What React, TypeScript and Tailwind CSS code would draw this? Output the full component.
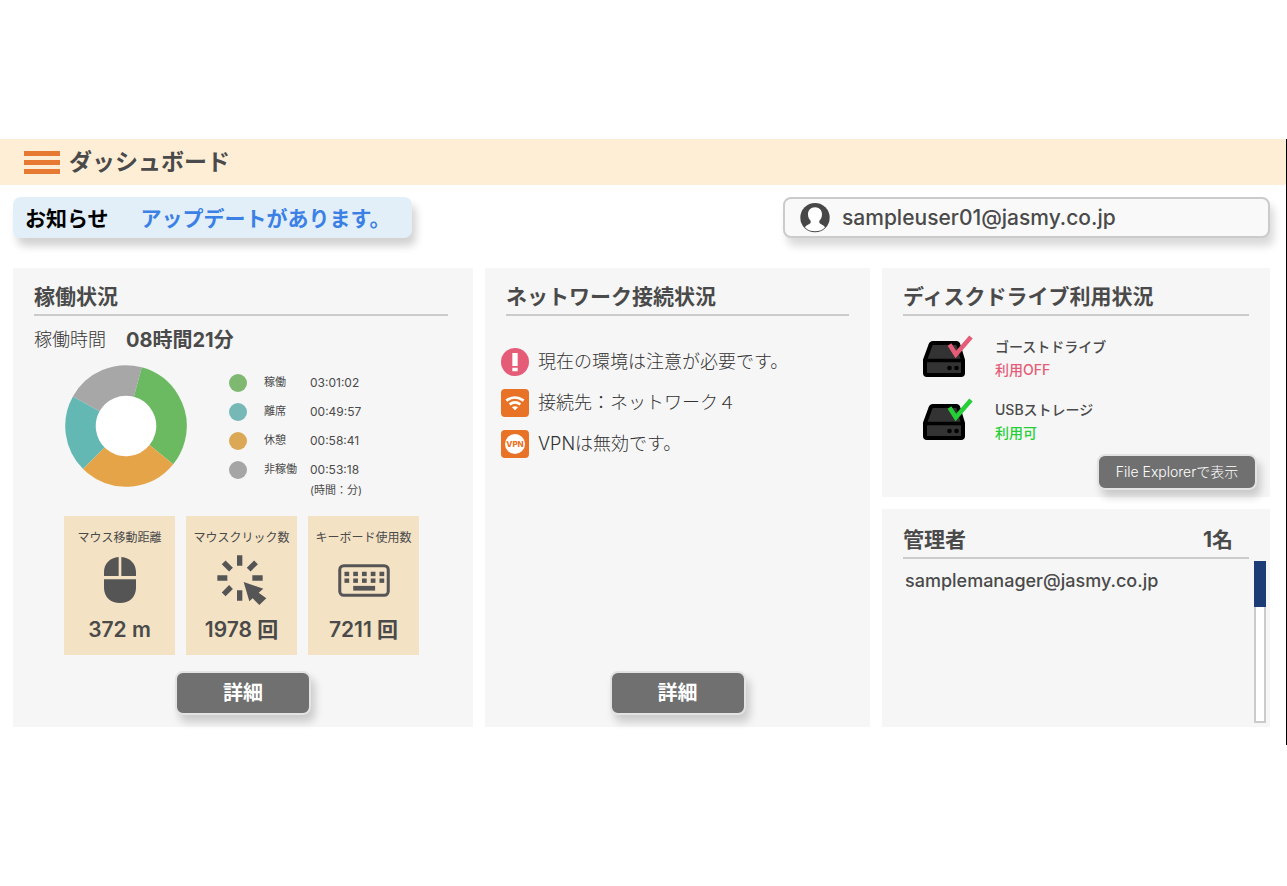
import type { ReactNode } from "react";

type Activity = { label: string; time: string; dot: string; stroke: string; from: number; to: number };

// from / to are degrees, clockwise from twelve o'clock
const activities: Activity[] = [
  { label: "稼働", time: "03:01:02", dot: "bg-[#7eb871]", stroke: "#6bba62", from: 15, to: 129 },
  { label: "離席", time: "00:49:57", dot: "bg-[#76b8b6]", stroke: "#64b8b3", from: 225, to: 299 },
  { label: "休憩", time: "00:58:41", dot: "bg-[#dba956]", stroke: "#e6a449", from: 129, to: 225 },
  { label: "非稼働", time: "00:53:18", dot: "bg-[#a5a5a5]", stroke: "#a7a7a7", from: 299, to: 375 },
];

function DonutChart() {
  return (
    <svg viewBox="0 0 122 122" className="h-[122px] w-[122px] shrink-0" role="img" aria-label="稼働状況">
      <circle cx="61" cy="61" r="31" fill="#fff" />
      {activities.map((a) => (
        <circle
          key={a.label}
          cx="61"
          cy="61"
          r="45.5"
          fill="none"
          stroke={a.stroke}
          strokeWidth="30.5"
          pathLength={360}
          strokeDasharray={`${a.to - a.from} ${360 - (a.to - a.from)}`}
          transform={`rotate(${a.from - 90} 61 61)`}
        />
      ))}
    </svg>
  );
}

function UserIcon() {
  return (
    <svg viewBox="0 0 90 90" className="h-[30px] w-[30px] shrink-0" aria-hidden="true">
      <circle cx="45" cy="44" r="44" fill="#474747" />
      <path
        d="M45 13c13 0 21 9 21 21 0 9-3 15-8 19v6c2 5 14 6 17 14-8 9-18 12-30 12S23 82 15 73c3-8 15-9 17-14v-6c-5-4-8-10-8-19 0-12 8-21 21-21z"
        fill="#fff"
      />
    </svg>
  );
}

function MouseIcon() {
  return (
    <svg viewBox="0 0 96 138" className="h-[46px] w-8" fill="#555" aria-hidden="true">
      <path d="M44 0v57H0V46C0 20 18 2 44 0zM52 0v57h44V46C96 20 78 2 52 0zM0 67h96v25c0 28-20 46-48 46S0 120 0 92z" />
    </svg>
  );
}

function ClickIcon() {
  return (
    <svg viewBox="0 0 150 150" className="h-[50px] w-[50px]" aria-hidden="true">
      <path
        d="M68 1v31M68 106v31M1 69h30M106 69h31M20 22l22 22M117 22L95 44M20 118l22-22"
        stroke="#555"
        strokeWidth="16"
        fill="none"
      />
      <path d="M80 81l59 20-14 12 23 17-21 20-20-20-10 9z" fill="#555" />
    </svg>
  );
}

function KeyboardIcon() {
  return (
    <svg viewBox="0 0 154 98" className="h-[33px] w-[52px]" fill="#555" aria-hidden="true">
      <rect x="5" y="5" width="144" height="88" rx="12" fill="none" stroke="#555" strokeWidth="9" />
      {[19, 45, 71, 97, 123].map((x) => (
        <g key={x}>
          <rect x={x} y="23" width="14" height="13" />
          <rect x={x} y="43" width="14" height="13" />
        </g>
      ))}
      <rect x="45" y="65" width="65" height="14" />
    </svg>
  );
}

function DriveIcon({ color }: { color: string }) {
  return (
    <svg viewBox="0 0 50 43" className="h-[43px] w-[50px] shrink-0" aria-hidden="true">
      <path
        d="M10 8h23.500q1.500 0 2 2l4.500 15v13q0 2-2 2H4q-2 0-2-2V25L7.500 10q.5-2 2.500-2z"
        fill="#333"
        stroke="#000"
        strokeWidth="4"
        strokeLinejoin="round"
      />
      <path d="M2 25.500h39" stroke="#000" strokeWidth="3.500" />
      <circle cx="26.500" cy="33" r="2.300" />
      <circle cx="33.500" cy="33" r="2.300" />
      <path d="M26.500 9.500l6.300 10L48 2" fill="none" stroke={color} strokeWidth="4.500" />
    </svg>
  );
}

function AlertIcon() {
  return (
    <svg viewBox="0 0 84 84" className="h-7 w-7 shrink-0" aria-hidden="true">
      <circle cx="42" cy="42" r="42" fill="#e45c77" />
      <path d="M34 15h16v39H34zM34 59h16v11H34z" fill="#fff" />
    </svg>
  );
}

function WifiIcon() {
  return (
    <svg viewBox="0 0 84 84" className="h-7 w-7 shrink-0" aria-hidden="true">
      <rect width="84" height="84" rx="12" fill="#e87326" />
      <path d="M16 35q26-19 52 0M26 46q16-12 32 0" fill="none" stroke="#fff" strokeWidth="8" />
      <path d="M33 55q9-6 18 0l-9 9z" fill="#fff" />
    </svg>
  );
}

function VpnIcon() {
  return (
    <svg viewBox="0 0 84 84" className="h-7 w-7 shrink-0" aria-hidden="true">
      <rect width="84" height="84" rx="12" fill="#e87326" />
      <circle cx="42" cy="42" r="30" fill="#fff" />
      <text x="42" y="50" textAnchor="middle" fontSize="24" fontWeight="800" fill="#e87326">
        VPN
      </text>
    </svg>
  );
}

function PanelHeading({ title, extra }: { title: string; extra?: string }) {
  return (
    <h2 className="mx-[21px] flex justify-between border-b-2 border-[#cbcbcb] pt-3 pr-4 text-[21px] leading-[34px] font-bold">
      <span>{title}</span>
      {extra && <span>{extra}</span>}
    </h2>
  );
}

function StatCard({ title, value, children }: { title: string; value: string; children: ReactNode }) {
  return (
    <li className="flex h-[139px] flex-1 flex-col items-center bg-[#f4e2c5] pt-3">
      <h3 className="text-xs leading-5 whitespace-nowrap">{title}</h3>
      <div className="flex h-16 items-center">{children}</div>
      <p className="text-[21px] leading-9 font-semibold whitespace-nowrap">{value}</p>
    </li>
  );
}

function DetailButton() {
  return (
    <button
      type="button"
      className="h-11 w-[136px] self-center rounded-lg border-2 border-[#e3e3e3] bg-[#707070] text-xl font-bold text-white shadow-[4px_7px_8px_rgba(0,0,0,0.18)]"
    >
      詳細
    </button>
  );
}

function Drive({ name, status, color, statusClass }: { name: string; status: string; color: string; statusClass: string }) {
  return (
    <li className="flex gap-[22px]">
      <DriveIcon color={color} />
      <div className="text-sm leading-[23px] font-medium">
        <p>{name}</p>
        <p className={statusClass}>{status}</p>
      </div>
    </li>
  );
}

export default function App() {
  return (
    <div className="bg-white pt-[139px] font-['Inter','Noto_Sans_CJK_JP',sans-serif] text-[#4a4a4a]">
      <div className="border-r border-black pb-[18px]">
        <header className="flex h-[46px] items-center gap-[9px] bg-[#ffeed6] pl-6">
          <button type="button" aria-label="メニュー" className="flex w-9 flex-col gap-1">
            <span className="h-[5px] bg-[#e67a32]" />
            <span className="h-[5px] bg-[#e67a32]" />
            <span className="h-[5px] bg-[#e67a32]" />
          </button>
          <h1 className="text-[23px] font-bold">ダッシュボード</h1>
        </header>

        <main className="pr-4 pl-[13px]">
          <div className="grid grid-cols-[399fr_487fr] gap-[371px] pt-3">
            <div className="flex h-[41px] items-center gap-8 rounded-lg bg-[#e2eff8] pt-0.5 pl-3 text-[21px] font-bold whitespace-nowrap shadow-[4px_8px_8px_rgba(0,0,0,0.18)]">
              <span className="text-black">お知らせ</span>
              <a href="#update" className="text-[#3a80e5]">
                アップデートがあります。
              </a>
            </div>
            <div className="flex h-[41px] items-center gap-3 rounded-lg border-2 border-[#cbcbcb] bg-[#f9f9f9] pl-[15px] text-[21px] font-medium shadow-[4px_8px_8px_rgba(0,0,0,0.15)]">
              <UserIcon />
              <span>sampleuser01@jasmy.co.jp</span>
            </div>
          </div>

          <div className="mt-[30px] grid grid-cols-[460fr_385fr_388fr] gap-3">
            <section className="flex flex-col bg-[#f6f6f6] pb-3">
              <div className="pr-1">
                <PanelHeading title="稼働状況" />
              </div>
              <p className="mx-[21px] mt-2 flex items-center gap-5 text-lg leading-8">
                <span className="font-light text-[#333]">稼働時間</span>
                <strong className="text-xl leading-8 font-bold">08時間21分</strong>
              </p>
              <div className="mt-[9px] flex gap-[42px] pl-[52px]">
                <DonutChart />
                <table className="mt-[3px] self-start text-left text-xs">
                  <tbody>
                    {activities.map((a) => (
                      <tr key={a.label} className="h-[29px]">
                        <td className="w-[35px]">
                          <span className={`block h-[18px] w-[18px] rounded-full ${a.dot}`} />
                        </td>
                        <th scope="row" className="w-[46px] text-[11px] font-normal">
                          {a.label}
                        </th>
                        <td>{a.time}</td>
                      </tr>
                    ))}
                  </tbody>
                  <tfoot>
                    <tr>
                      <td />
                      <td />
                      <td className="text-[11px] leading-3">(時間：分)</td>
                    </tr>
                  </tfoot>
                </table>
              </div>
              <ul className="mt-5 mr-[54px] ml-[51px] flex gap-[11px]">
                <StatCard title="マウス移動距離" value="372 m">
                  <MouseIcon />
                </StatCard>
                <StatCard title="マウスクリック数" value="1978 回">
                  <ClickIcon />
                </StatCard>
                <StatCard title="キーボード使用数" value="7211 回">
                  <KeyboardIcon />
                </StatCard>
              </ul>
              <div className="mt-4 flex justify-center">
                <DetailButton />
              </div>
            </section>

            <section className="flex flex-col justify-between bg-[#f6f6f6] pb-3">
              <div>
                <PanelHeading title="ネットワーク接続状況" />
                <ul className="mt-8 flex flex-col gap-[13px] pl-4 text-lg leading-7 font-light text-[#333]">
                  <li className="flex gap-[9px]">
                    <AlertIcon />
                    現在の環境は注意が必要です。
                  </li>
                  <li className="flex gap-[9px]">
                    <WifiIcon />
                    接続先：ネットワーク４
                  </li>
                  <li className="flex gap-[9px]">
                    <VpnIcon />
                    VPNは無効です。
                  </li>
                </ul>
              </div>
              <DetailButton />
            </section>

            <div className="flex flex-col gap-3">
              <section className="flex h-[229px] flex-col bg-[#f6f6f6]">
                <PanelHeading title="ディスクドライブ利用状況" />
                <ul className="mt-[19px] flex flex-col gap-[17px] pl-[41px]">
                  <Drive name="ゴーストドライブ" status="利用OFF" color="#e45c77" statusClass="text-[#e45c77]" />
                  <Drive name="USBストレージ" status="利用可" color="#25cf35" statusClass="text-[#25cf35]" />
                </ul>
                <button
                  type="button"
                  className="mt-[10px] mr-[13px] h-9 w-40 self-end rounded-lg border-2 border-[#e3e3e3] bg-[#707070] text-sm font-light whitespace-nowrap text-white shadow-[4px_7px_8px_rgba(0,0,0,0.18)]"
                >
                  File Explorerで表示
                </button>
              </section>

              <section className="flex flex-1 flex-col bg-[#f6f6f6] pt-0.5">
                <PanelHeading title="管理者" extra="1名" />
                <div className="flex flex-1 justify-between pt-0.5 pr-1 pb-1 pl-[23px]">
                  <p className="pt-1.5 text-lg font-medium">samplemanager@jasmy.co.jp</p>
                  <div className="flex w-3 flex-col border-2 border-t-0 border-[#cbcbcb] bg-white">
                    <div className="-mx-0.5 h-[46px] bg-[#1d3b75]" />
                  </div>
                </div>
              </section>
            </div>
          </div>
        </main>
      </div>
    </div>
  );
}
